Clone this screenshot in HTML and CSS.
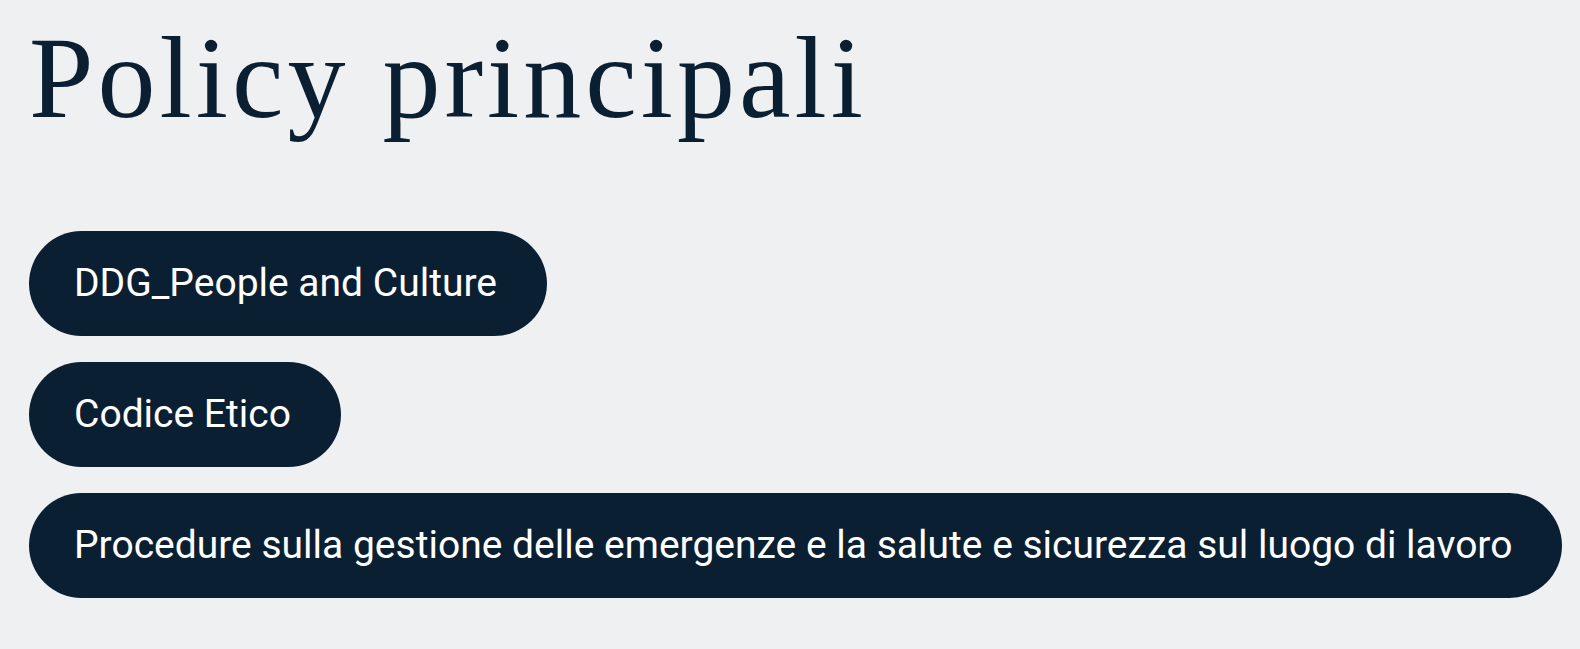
FILE: index.html
```html
<!DOCTYPE html>
<html lang="it">
<head>
  <meta charset="UTF-8">
  <meta name="viewport" content="width=device-width, initial-scale=1.0">
  <title>Policy principali</title>
  <link rel="stylesheet" href="styles.css">
</head>
<body>
  <section class="policies">
    <h1 class="policies-title">Policy principali</h1>
    <ul class="policy-list">
      <li><a class="policy-pill" href="#">DDG_People and Culture</a></li>
      <li><a class="policy-pill" href="#">Codice Etico</a></li>
      <li><a class="policy-pill" href="#">Procedure sulla gestione delle emergenze e la salute e sicurezza sul luogo di lavoro</a></li>
    </ul>
  </section>
</body>
</html>
```

FILE: styles.css
```css
body {
  margin: 0;
  background-color: #eff0f2;
  color: #0b1f33;
  font-family: Roboto, Arial, sans-serif;
}
.policies {
  padding: 0 8px 0 29px;
}
.policies-title {
  margin: 0;
  padding-top: 8px;
  font-family: "Liberation Serif", "Times New Roman", serif;
  font-size: 116px;
  font-weight: 400;
  letter-spacing: 4px;
  line-height: 140px;
}
.policy-list {
  list-style: none;
  margin: 83px 0 0;
  padding: 0;
  display: flex;
  flex-direction: column;
  align-items: flex-start;
  gap: 26px;
}
.policy-pill {
  display: inline-block;
  padding: 0 50px 0 45px;
  height: 105px;
  line-height: 105px;
  border-radius: 53px;
  background-color: #0b1f33;
  color: #fff;
  font-size: 39px;
  white-space: nowrap;
  text-decoration: none;
}
```
